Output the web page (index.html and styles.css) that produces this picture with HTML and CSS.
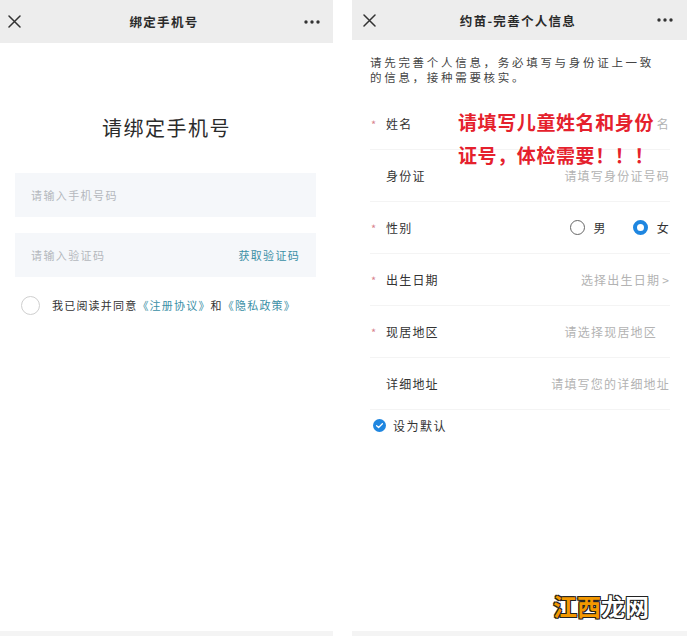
FILE: index.html
```html
<!DOCTYPE html>
<html lang="zh-CN">
<head>
<meta charset="utf-8">
<title>绑定手机号 / 完善个人信息</title>
<link rel="stylesheet" href="styles.css">
</head>
<body>
<div class="page">
  <section class="panel left">
    <header class="bar bar-l">
      <span class="ico close"><svg width="13" height="13" viewBox="0 0 13 13"><path d="M1 1L12 12M12 1L1 12" stroke="#333" stroke-width="1.5" stroke-linecap="round"/></svg></span>
      <span class="bar-title">绑定手机号</span>
      <span class="ico more"><svg width="16" height="4" viewBox="0 0 16 4"><circle cx="2" cy="2" r="1.7" fill="#333"/><circle cx="8" cy="2" r="1.7" fill="#333"/><circle cx="14" cy="2" r="1.7" fill="#333"/></svg></span>
    </header>
    <h1 class="bind-title">请绑定手机号</h1>
    <div class="field"><span class="ph">请输入手机号码</span></div>
    <div class="field field-code"><span class="ph">请输入验证码</span><span class="get-code">获取验证码</span></div>
    <div class="agree">
      <span class="circle"></span>
      <span class="agree-text">我已阅读并同意<span class="link">《注册协议》</span>和<span class="link">《隐私政策》</span></span>
    </div>
    <div class="foot"></div>
  </section>

  <section class="panel right">
    <header class="bar bar-r">
      <span class="ico close"><svg width="13" height="13" viewBox="0 0 13 13"><path d="M1 1L12 12M12 1L1 12" stroke="#333" stroke-width="1.5" stroke-linecap="round"/></svg></span>
      <span class="bar-title">约苗-完善个人信息</span>
      <span class="ico more"><svg width="16" height="4" viewBox="0 0 16 4"><circle cx="2" cy="2" r="1.7" fill="#333"/><circle cx="8" cy="2" r="1.7" fill="#333"/><circle cx="14" cy="2" r="1.7" fill="#333"/></svg></span>
    </header>
    <p class="intro">请先完善个人信息，务必填写与身份证上一致<br>的信息，接种需要核实。</p>
    <div class="form">
      <div class="row"><span class="star">*</span><span class="label">姓名</span><span class="val">名</span></div>
      <div class="row"><span class="star"></span><span class="label">身份证</span><span class="val">请填写身份证号码</span></div>
      <div class="row"><span class="star">*</span><span class="label">性别</span>
        <span class="val gender">
          <span class="radio"></span><span class="g">男</span>
          <span class="radio on"></span><span class="g">女</span>
        </span>
      </div>
      <div class="row"><span class="star">*</span><span class="label">出生日期</span><span class="val">选择出生日期<span class="chev">&gt;</span></span></div>
      <div class="row"><span class="star">*</span><span class="label">现居地区</span><span class="val val-area">请选择现居地区</span></div>
      <div class="row"><span class="star"></span><span class="label">详细地址</span><span class="val">请填写您的详细地址</span></div>
      <div class="default">
        <span class="check"><svg width="13" height="13" viewBox="0 0 13 13"><circle cx="6.5" cy="6.5" r="6.5" fill="#1f86e0"/><path d="M3.6 6.7L5.6 8.5L9.4 4.7" stroke="#fff" stroke-width="1.3" fill="none" stroke-linecap="round" stroke-linejoin="round"/></svg></span>
        <span class="default-text">设为默认</span>
      </div>
    </div>
    <div class="note">请填写儿童姓名和身份<br>证号，体检需要！！！</div>
    <div class="watermark"><span class="wm-o">江西</span><span class="wm-w">龙网</span></div>
    <div class="foot"></div>
  </section>
</div>
</body>
</html>
```

FILE: styles.css
```css
* { box-sizing: border-box; margin: 0; padding: 0; }
html, body { background: #fff; }
body {
  font-family: "Noto Sans CJK SC", "Noto Sans", sans-serif;
  color: #333;
  width: 687px;
  height: 636px;
  overflow: hidden;
}
.page {
  display: flex;
  gap: 19px;
  height: 636px;
}
.panel {
  position: relative;
  display: flex;
  flex-direction: column;
  height: 636px;
}
.left { width: 333px; }
.right { width: 335px; }

.bar {
  display: grid;
  grid-template-columns: 1fr auto 1fr;
  align-items: center;
  background: #ededed;
}
.bar-l { height: 43px; padding: 0 13px 0 8px; }
.bar-r { height: 40px; padding: 0 14px 0 11px; }
.ico { display: flex; align-items: center; }
.close { justify-self: start; }
.more { justify-self: end; }
.bar-title {
  font-size: 12.5px;
  font-weight: 700;
  letter-spacing: 1.3px;
  color: #2a2a2a;
}

.bind-title {
  margin-top: 70px;
  text-align: center;
  font-size: 20px;
  line-height: 30px;
  font-weight: 400;
  letter-spacing: 1.5px;
  color: #2b2b2b;
}
.field {
  margin: 30px 17px 0 15px;
  height: 44px;
  background: #f5f7fa;
  display: flex;
  align-items: center;
  justify-content: space-between;
  padding: 0 16px;
}
.field-code { margin-top: 16px; }
.ph {
  font-size: 11px;
  letter-spacing: 1.4px;
  color: #b4b8bd;
}
.get-code {
  font-size: 11px;
  letter-spacing: 1.3px;
  color: #3a8fa6;
}
.agree {
  margin: 18px 0 0 21px;
  height: 20px;
  display: flex;
  align-items: center;
}
.circle {
  width: 19px;
  height: 19px;
  border: 1px solid #cfcfcf;
  border-radius: 50%;
}
.agree-text {
  margin-left: 12px;
  font-size: 11px;
  letter-spacing: 1.2px;
  color: #333;
}
.link { color: #3a8fa6; }

.foot {
  margin-top: auto;
  height: 5px;
  background: #f4f4f4;
}

.intro {
  margin: 15px 0 0 18px;
  font-size: 11.5px;
  line-height: 15px;
  letter-spacing: 2.7px;
  color: #444;
}
.form {
  margin-top: 13px;
}
.row {
  height: 52px;
  margin: 0 17px 0 18px;
  display: flex;
  align-items: center;
  border-bottom: 1px solid #f4f4f4;
}
.star {
  width: 16px;
  padding-left: 1px;
  font-size: 11px;
  color: #d8828f;
}
.label {
  font-size: 12px;
  letter-spacing: 1.2px;
  color: #333;
}
.val {
  margin-left: auto;
  font-size: 12px;
  letter-spacing: 1.2px;
  color: #b3b3b3;
  display: flex;
  align-items: center;
}
.val-area { margin-right: 13px; }
.chev { margin-left: 2px; color: #b3b3b3; }
.gender { color: #333; }
.radio {
  width: 15px;
  height: 15px;
  border: 1.3px solid #666;
  border-radius: 50%;
}
.radio.on {
  border: 4px solid #1f86e0;
  background: #fff;
  margin-left: 26px;
}
.g { margin-left: 9px; }

.default {
  height: 30px;
  display: flex;
  align-items: center;
  padding-left: 21px;
}
.check { display: flex; }
.default-text {
  margin-left: 7px;
  font-size: 12px;
  letter-spacing: 1.5px;
  color: #333;
}

.note {
  position: absolute;
  left: 104px;
  top: 105px;
  width: 205px;
  padding-left: 2px;
  font-size: 19px;
  line-height: 33px;
  font-weight: 700;
  letter-spacing: 0.6px;
  color: #e5212d;
}
.watermark {
  position: absolute;
  left: 201px;
  top: 588px;
  font-size: 24px;
  font-weight: 700;
  letter-spacing: 0;
  -webkit-text-stroke: 1px #111;
  paint-order: stroke fill;
  text-shadow: 1px 1px 0 #222, -1px -1px 0 #222, 1px -1px 0 #222, -1px 1px 0 #222;
}
.wm-o { color: #f39800; }
.wm-w { color: #fff; }
```
